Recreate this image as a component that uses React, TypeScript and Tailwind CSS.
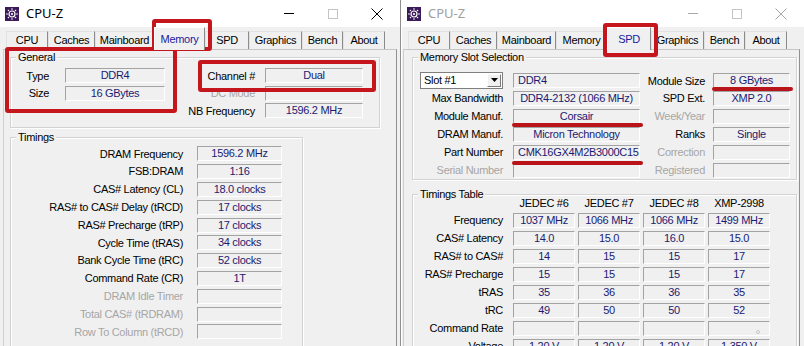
import React from "react";

const FONT = "font-['Liberation_Sans',Arial,sans-serif]";

const TABS: [string, string][] = [
  ["CPU", "w-[42px]"],
  ["Caches", "w-[47px]"],
  ["Mainboard", "w-[59px]"],
  ["Memory", "w-[51px]"],
  ["SPD", "w-[44px]"],
  ["Graphics", "w-[53px]"],
  ["Bench", "w-[41px]"],
  ["About", "w-[42px]"],
];

function CpuzIcon() {
  const dots = [0, 45, 90, 135, 180, 225, 270, 315];
  return (
    <svg width="14" height="14" viewBox="0 0 14 14">
      <rect width="14" height="14" fill="#3b1a5c" />
      <circle cx="7" cy="7" r="3" fill="none" stroke="#fff" strokeWidth="1.2" />
      <circle cx="7" cy="7" r="1.1" fill="#fff" />
      {dots.map((a) => (
        <circle
          key={a}
          cx={7 + 5 * Math.cos((a * Math.PI) / 180)}
          cy={7 + 5 * Math.sin((a * Math.PI) / 180)}
          r="0.8"
          fill="#fff"
        />
      ))}
    </svg>
  );
}

function TitleBar({ active }: { active: boolean }) {
  const ink = active ? "bg-black" : "bg-[#a8a8a8]";
  const stroke = active ? "#000" : "#a8a8a8";
  return (
    <div className="h-[27px] bg-white flex items-center shrink-0">
      <div className="ml-[5px] flex">
        <CpuzIcon />
      </div>
      <span
        className={`ml-[7px] text-[13px] tracking-normal font-['Noto_Sans',sans-serif] ${
          active ? "text-black" : "text-[#a0a0a0]"
        }`}
      >
        CPU-Z
      </span>
      <div className="ml-auto mr-[1px] flex h-full">
        <div className="w-[44px] flex items-center justify-center">
          <div className={`w-[10px] h-px ${ink}`} />
        </div>
        <div className="w-[44px] flex items-center justify-center">
          <div className="w-[10px] h-[10px] border border-[#c4c4c4]" />
        </div>
        <div className="w-[44px] flex items-center justify-center">
          <svg width="12" height="12" viewBox="0 0 12 12">
            <path d="M0.5 0.5 L11.5 11.5 M11.5 0.5 L0.5 11.5" stroke={stroke} strokeWidth="1" />
          </svg>
        </div>
      </div>
    </div>
  );
}

function Tabs({ selected }: { selected: string }) {
  return (
    <div className="h-[22px] flex items-end pl-[6px] shrink-0">
      {TABS.map(([name, w]) =>
        name === selected ? (
          <div
            key={name}
            className={`${w} relative z-10 -mb-px h-[23px] flex items-center justify-center bg-[#f0f0f0] border-t border-l border-white border-r border-r-[#8c8c8c] text-[#1a1aa0]`}
          >
            {name}
          </div>
        ) : (
          <div
            key={name}
            className={`${w} h-[18px] flex items-center justify-center border-t border-l border-[#e2e2e2] border-r border-r-[#8c8c8c] text-black`}
          >
            {name}
          </div>
        )
      )}
    </div>
  );
}

function Field({ v = "", cls, left }: { v?: string; cls: string; left?: boolean }) {
  return (
    <div
      className={`${cls} relative h-[15px] shrink-0 border border-t-[#a3a3a3] border-l-[#a3a3a3] border-r-white border-b-white text-[#1b1b72] leading-[13px] whitespace-nowrap overflow-hidden ${
        left ? "text-left pl-[4px]" : "text-center"
      }`}
    >
      {v}
    </div>
  );
}

function Label({ t, cls, dim }: { t: string; cls: string; dim?: boolean }) {
  return (
    <div className={`${cls} shrink-0 text-right whitespace-nowrap ${dim ? "text-[#a6a6a6]" : "text-black"}`}>
      {t}
    </div>
  );
}

function Group({ title, cls, children }: { title: string; cls: string; children: React.ReactNode }) {
  return (
    <div className={`relative border border-[#d3d3d3] shadow-[inset_1px_1px_0_#fff,1px_1px_0_#fff] ${cls}`}>
      <span className="absolute -top-[8px] left-[5px] px-[2px] bg-[#f0f0f0] leading-[14px] text-black">
        {title}
      </span>
      {children}
    </div>
  );
}

function Window({
  active,
  selected,
  cls,
  panelCls,
  children,
}: {
  active: boolean;
  selected: string;
  cls: string;
  panelCls: string;
  children: React.ReactNode;
}) {
  return (
    <div className={`${cls} h-full flex flex-col bg-[#f0f0f0] shrink-0`}>
      <TitleBar active={active} />
      <Tabs selected={selected} />
      <div
        className={`${panelCls} flex-1 border border-t-[#c6c6c6] border-l-[#cfcfcf] border-r-[#8f8f8f] border-b-[#8f8f8f]`}
      >
        {children}
      </div>
    </div>
  );
}

const TIMINGS: [string, string, boolean?][] = [
  ["DRAM Frequency", "1596.2 MHz"],
  ["FSB:DRAM", "1:16"],
  ["CAS# Latency (CL)", "18.0 clocks"],
  ["RAS# to CAS# Delay (tRCD)", "17 clocks"],
  ["RAS# Precharge (tRP)", "17 clocks"],
  ["Cycle Time (tRAS)", "34 clocks"],
  ["Bank Cycle Time (tRC)", "52 clocks"],
  ["Command Rate (CR)", "1T"],
  ["DRAM Idle Timer", "", true],
  ["Total CAS# (tRDRAM)", "", true],
  ["Row To Column (tRCD)", "", true],
];

function MemoryTab() {
  return (
    <div className="pl-[6px]">
      <Group title="General" cls="mt-[7px] w-[370px] pt-[9px] pb-[7px]">
        <div className="flex h-[17.5px] items-center">
          <Label t="Type" cls="w-[38px]" />
          <Field v="DDR4" cls="ml-[16px] w-[100px]" />
          <Label t="Channel #" cls="w-[90px]" />
          <Field v="Dual" cls="ml-[10px] w-[98px]" />
        </div>
        <div className="flex h-[17.5px] items-center">
          <Label t="Size" cls="w-[38px]" />
          <Field v="16 GBytes" cls="ml-[16px] w-[100px]" />
          <Label t="DC Mode" cls="w-[90px]" dim />
          <Field cls="ml-[10px] w-[98px]" />
        </div>
        <div className="flex h-[17.5px] items-center">
          <div className="w-[154px] shrink-0" />
          <Label t="NB Frequency" cls="w-[90px]" />
          <Field v="1596.2 MHz" cls="ml-[10px] w-[98px]" />
        </div>
      </Group>
      <Group title="Timings" cls="mt-[9.5px] w-[293px] pt-[7px] pb-[8px]">
        {TIMINGS.map(([l, v, dim]) => (
          <div key={l} className="flex h-[17.8px] items-center">
            <Label t={l} cls="w-[172px]" dim={dim} />
            <Field v={v} cls="ml-[14px] w-[85px]" />
          </div>
        ))}
      </Group>
    </div>
  );
}

const SLOT_ROWS: [string, string, boolean, boolean, string, string, boolean][] = [
  ["Max Bandwidth", "DDR4-2132 (1066 MHz)", false, false, "SPD Ext.", "XMP 2.0", false],
  ["Module Manuf.", "Corsair", false, false, "Week/Year", "", true],
  ["DRAM Manuf.", "Micron Technology", false, false, "Ranks", "Single", false],
  ["Part Number", "CMK16GX4M2B3000C15", false, true, "Correction", "", true],
  ["Serial Number", "", true, false, "Registered", "", true],
];

const TABLE: [string, string[]][] = [
  ["Frequency", ["1037 MHz", "1066 MHz", "1066 MHz", "1499 MHz"]],
  ["CAS# Latency", ["14.0", "15.0", "16.0", "15.0"]],
  ["RAS# to CAS#", ["14", "15", "15", "17"]],
  ["RAS# Precharge", ["15", "15", "15", "17"]],
  ["tRAS", ["35", "36", "36", "35"]],
  ["tRC", ["49", "50", "50", "52"]],
  ["Command Rate", ["", "", "", ""]],
  ["Voltage", ["1.20 V", "1.20 V", "1.20 V", "1.350 V"]],
];

function SpdTab() {
  return (
    <div className="pl-[8px]">
      <Group title="Memory Slot Selection" cls="mt-[7px] w-[385px] pt-[13px]">
        <div className="flex h-[18px] items-center">
          <div className="ml-[7px] w-[83px] h-[17px] shrink-0 flex bg-white border border-[#7f7f7f]">
            <span className="flex-1 pl-[3px] leading-[15px] text-black">Slot #1</span>
            <div className="w-[14px] m-px bg-[#f0f0f0] border border-t-white border-l-white border-r-[#7a7a7a] border-b-[#7a7a7a] flex items-center justify-center">
              <svg width="7" height="4" viewBox="0 0 7 4">
                <path d="M0 0 H7 L3.5 4 Z" fill="#000" />
              </svg>
            </div>
          </div>
          <Field v="DDR4" cls="ml-[10px] w-[127px]" left />
          <Label t="Module Size" cls="w-[65px] pt-[3px]" />
          <Field v="8 GBytes" cls="ml-[8px] w-[77px]" />
        </div>
        {SLOT_ROWS.map(([l, v, ld, left, r, rv, rd]) => (
          <div key={l} className="flex h-[18px] items-center">
            <Label t={l} cls="w-[90px]" dim={ld} />
            <Field v={v} cls="ml-[10px] w-[127px]" left={left} />
            <Label t={r} cls="w-[65px]" dim={rd} />
            <Field v={rv} cls="ml-[8px] w-[77px]" />
          </div>
        ))}
      </Group>
      <Group title="Timings Table" cls="mt-[14px] w-[385px] pb-[6px]">
        <div className="flex h-[16px] items-center">
          <div className="w-[100px] shrink-0" />
          <div className="grid grid-cols-[62px_62px_62px_62px] gap-x-[3px] text-center text-black">
            <span>JEDEC #6</span>
            <span>JEDEC #7</span>
            <span>JEDEC #8</span>
            <span>XMP-2998</span>
          </div>
        </div>
        {TABLE.map(([l, vals]) => (
          <div key={l} className="flex h-[18px] items-center">
            <Label t={l} cls="w-[90px]" />
            <div className="ml-[10px] flex gap-x-[3px]">
              {vals.map((v, i) => (
                <div key={i} className="relative">
                  <Field v={v} cls="w-[62px]" />
                  {l === "Command Rate" && i === 3 && (
                    <span className="absolute right-[10px] bottom-[2px] w-[4px] h-[4px] rounded-full border border-[#c8c8c8]" />
                  )}
                </div>
              ))}
            </div>
          </div>
        ))}
      </Group>
    </div>
  );
}

export default function App() {
  return (
    <div className={`relative w-[804px] h-[346px] overflow-hidden bg-[#f0f0f0] flex text-[11px] tracking-[-0.3px] ${FONT}`}>
      <Window active selected="Memory" cls="w-[401px] border-r border-[#8f8f8f]" panelCls="mx-[3px]">
        <MemoryTab />
      </Window>
      <Window active={false} selected="SPD" cls="w-[403px] border-l border-white" panelCls="ml-[1px] mr-[4px]">
        <SpdTab />
      </Window>

      {/* red highlights */}
      <div className="absolute left-[152px] top-[19px] w-[60px] h-[32px] border-[4px] border-[#c4161c] rounded-[3px]" />
      <div className="absolute left-[5px] top-[47px] w-[172px] h-[66px] border-[4px] border-[#c4161c] rounded-[3px]" />
      <div className="absolute left-[198px] top-[60px] w-[178px] h-[32px] border-[4px] border-[#c4161c] rounded-[3px]" />
      <div className="absolute left-[603px] top-[23px] w-[55px] h-[34px] border-[4px] border-[#c4161c] rounded-[3px]" />
      <div className="absolute left-[712px] top-[87px] w-[81px] h-[4px] bg-[#b8141a] rounded-full" />
      <div className="absolute left-[512px] top-[123px] w-[131px] h-[4px] bg-[#b8141a] rounded-full" />
      <div className="absolute left-[512px] top-[161px] w-[131px] h-[4px] bg-[#b8141a] rounded-full" />
    </div>
  );
}
